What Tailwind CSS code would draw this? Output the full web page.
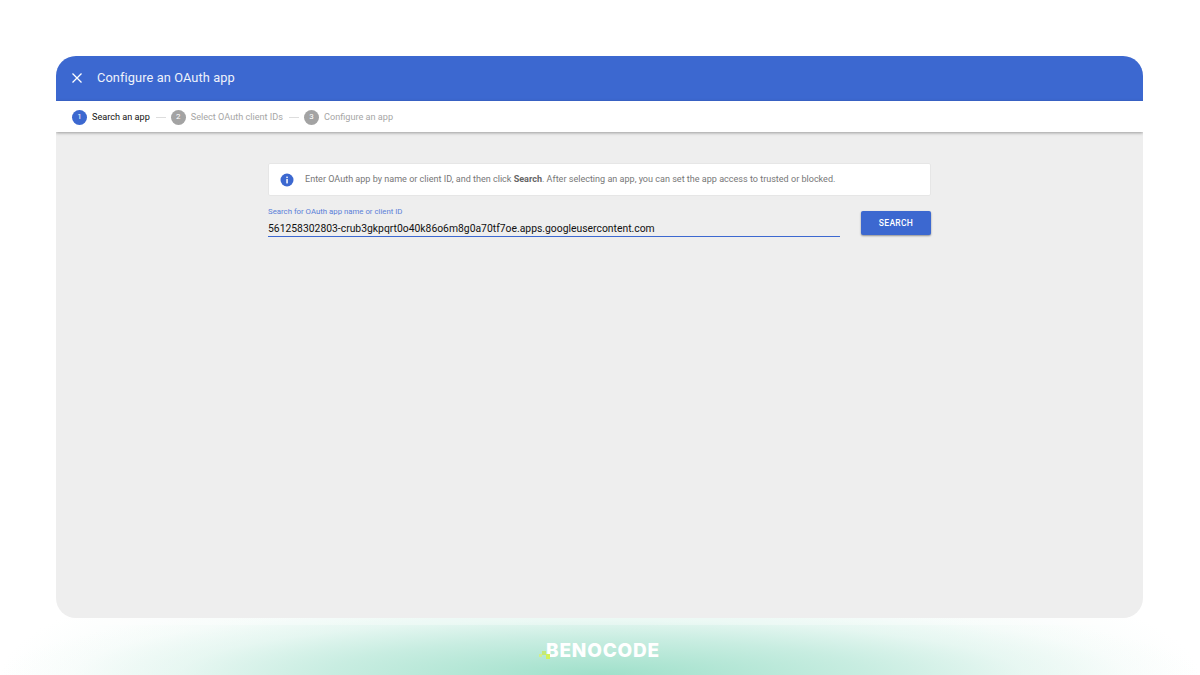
<!DOCTYPE html>
<html lang="en">
<head>
    <meta charset="UTF-8">
    <title>Configure an OAuth app</title>
    <script src="https://cdn.jsdelivr.net/npm/@tailwindcss/browser@4"></script>
</head>
<body class="relative w-[1200px] h-[675px] overflow-hidden bg-white font-['Roboto',sans-serif]">
    <!-- footer glow -->
    <div class="absolute left-0 bottom-0 w-[1200px] h-[85px] bg-[radial-gradient(ellipse_600px_80px_at_50%_100%,#9fe0ca_0%,#c8ede1_45%,#def4ed99_70%,#eefaf640_88%,#ffffff00_100%),radial-gradient(ellipse_600px_130px_at_50%_100%,#e8f8f2_0%,#eefaf6_50%,#f7fcfa_76%,#ffffff_100%)]"></div>
    <div class="absolute left-0 top-[618px] w-[1200px] h-[7px] bg-white/30"></div>

    <div class="relative pt-[56px] pl-[56px]">
        <div class="w-[1087px] h-[562px] rounded-[20px] overflow-hidden bg-[#eeeeee] flex flex-col">
            <!-- header -->
            <div class="h-[45px] bg-[#3c68d0] flex items-center pl-[16px] pb-[1px] text-white">
                <svg class="w-[10px] h-[10px]" viewBox="0 0 10 10" fill="none" stroke="white" stroke-width="1.3"><path d="M0.5 0.5l9 9M9.5 0.5l-9 9"/></svg>
                <span class="ml-[15px] text-[12.8px] leading-none tracking-[0.1px] text-[#eef2fb]">Configure an OAuth app</span>
            </div>
            <!-- stepper -->
            <div class="h-[31px] bg-white flex items-center pl-[16px] pt-[1px] text-[9.15px] shadow-[0_1px_3px_rgba(0,0,0,0.35)] relative">
                <span class="w-[15px] h-[15px] rounded-full bg-[#3c68d0] text-white text-[8px] flex items-center justify-center">1</span>
                <span class="ml-[5px] mt-[1px] text-[#111]">Search an app</span>
                <span class="ml-[6px] w-[10px] h-px bg-[#ddd]"></span>
                <span class="ml-[5px] w-[15px] h-[15px] rounded-full bg-[#a3a3a3] text-white text-[8px] flex items-center justify-center">2</span>
                <span class="ml-[5px] mt-[1px] text-[#a6a6a6]">Select OAuth client IDs</span>
                <span class="ml-[6px] w-[10px] h-px bg-[#ddd]"></span>
                <span class="ml-[5px] w-[15px] h-[15px] rounded-full bg-[#a3a3a3] text-white text-[8px] flex items-center justify-center">3</span>
                <span class="ml-[5px] mt-[1px] text-[#a6a6a6]">Configure an app</span>
            </div>
            <!-- body -->
            <div class="pt-[31px] pl-[212px] w-[875px]">
                <div class="w-[663px] h-[33px] bg-white border border-[#e6e6e6] rounded-[2px] flex items-center pl-[12px] pt-[1px] text-[9.05px] text-[#777]">
                    <svg class="w-[14px] h-[14px] -ml-[1px] -mt-[1px]" viewBox="0 0 14 14"><circle cx="7" cy="7" r="6.5" fill="#3c68d0"/><rect x="6.3" y="6" width="1.5" height="4.4" fill="white"/><rect x="6.3" y="3.6" width="1.5" height="1.5" fill="white"/></svg>
                    <span class="ml-[11px]">Enter OAuth app by name or client ID, and then click <b class="font-bold text-[#666]">Search</b>. After selecting an app, you can set the app access to trusted or blocked.</span>
                </div>
                <div class="flex items-start mt-[10px]">
                    <div class="w-[572px] h-[31px] border-b border-[#3c68d0] shrink-0 pt-[1px]">
                        <div class="text-[7.8px] leading-[10px] text-[#5a7fd8]">Search for OAuth app name or client ID</div>
                        <div class="text-[10.36px] leading-[13px] mt-[5px] text-[#111]">561258302803-crub3gkpqrt0o40k86o6m8g0a70tf7oe.apps.googleusercontent.com</div>
                    </div>
                    <div class="ml-[21px] mt-[5px] w-[70px] h-[24px] bg-[#3c68d0] rounded-[2px] shadow-[0_1px_2px_rgba(0,0,0,0.4)] text-white text-[8.5px] font-medium tracking-[0.3px] flex items-center justify-center">SEARCH</div>
                </div>
            </div>
        </div>
    </div>

    <!-- logo -->
    <div class="absolute left-[546px] top-[640px]">
        <span class="text-white text-[19px] leading-[19px] font-extrabold font-['Inter',sans-serif] tracking-[0.8px]">BENOCODE</span>
        <svg class="absolute -left-[7px] top-[10px] w-[12px] h-[9px]" viewBox="0 0 12 9"><rect x="0" y="4" width="3" height="3" fill="#d3ef8c"/><rect x="3" y="1" width="4" height="4" fill="#c4e977"/><rect x="7" y="4" width="4" height="5" fill="#d2f25a"/></svg>
    </div>
</body>
</html>
